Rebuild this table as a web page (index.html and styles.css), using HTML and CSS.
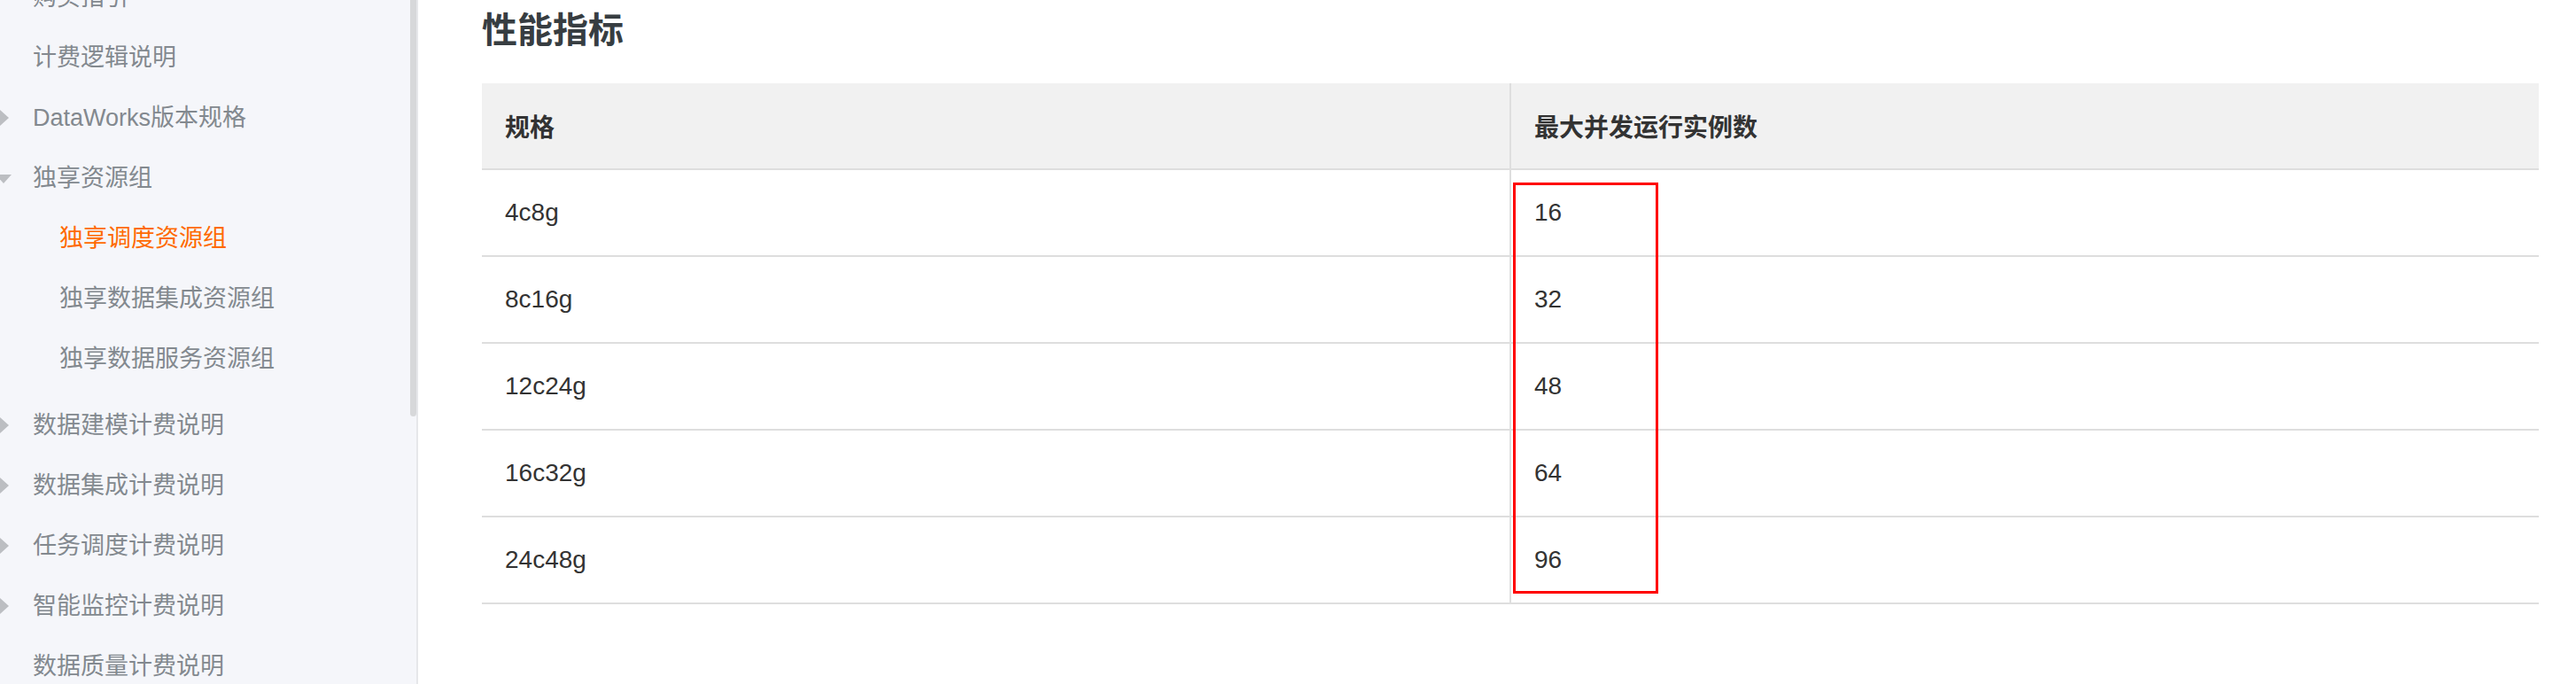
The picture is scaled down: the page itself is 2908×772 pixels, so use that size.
FILE: index.html
```html
<!DOCTYPE html>
<html lang="zh-CN">
<head>
<meta charset="utf-8">
<title>性能指标</title>
<link rel="stylesheet" href="styles.css">
</head>
<body>
<div class="page">
  <nav class="sidebar">
    <ul class="menu">
      <li class="item"><span class="caret"></span><span class="label">购买指引</span></li>
      <li class="item"><span class="caret"></span><span class="label">计费逻辑说明</span></li>
      <li class="item"><span class="caret caret-right"></span><span class="label">DataWorks版本规格</span></li>
      <li class="group">
        <div class="item"><span class="caret caret-down"></span><span class="label">独享资源组</span></div>
        <ul class="submenu">
          <li class="item sub active"><span class="caret"></span><span class="label">独享调度资源组</span></li>
          <li class="item sub"><span class="caret"></span><span class="label">独享数据集成资源组</span></li>
          <li class="item sub"><span class="caret"></span><span class="label">独享数据服务资源组</span></li>
        </ul>
      </li>
      <li class="item"><span class="caret caret-right"></span><span class="label">数据建模计费说明</span></li>
      <li class="item"><span class="caret caret-right"></span><span class="label">数据集成计费说明</span></li>
      <li class="item"><span class="caret caret-right"></span><span class="label">任务调度计费说明</span></li>
      <li class="item"><span class="caret caret-right"></span><span class="label">智能监控计费说明</span></li>
      <li class="item"><span class="caret"></span><span class="label">数据质量计费说明</span></li>
    </ul>
    <div class="scroll-thumb"></div>
  </nav>

  <main class="content">
    <h2 class="title">性能指标</h2>
    <div class="table-wrap">
      <div class="table">
        <div class="cell head">规格</div>
        <div class="cell head col2">最大并发运行实例数</div>
        <div class="cell">4c8g</div>
        <div class="cell col2">16</div>
        <div class="cell">8c16g</div>
        <div class="cell col2">32</div>
        <div class="cell">12c24g</div>
        <div class="cell col2">48</div>
        <div class="cell">16c32g</div>
        <div class="cell col2">64</div>
        <div class="cell">24c48g</div>
        <div class="cell col2">96</div>
      </div>
      <div class="highlight"></div>
    </div>
  </main>
</div>
</body>
</html>
```

FILE: styles.css
```css
html, body {
  margin: 0;
  padding: 0;
  background: #ffffff;
}

body {
  font-family: "Liberation Sans", "Noto Sans CJK SC", sans-serif;
  width: 2908px;
  height: 772px;
  overflow: hidden;
}

.page {
  display: flex;
  height: 772px;
}

/* ---------- sidebar ---------- */
.sidebar {
  position: relative;
  flex: none;
  width: 470px;
  height: 772px;
  overflow: hidden;
  background: #f5f6fa;
  border-right: 2px solid #e6e7ea;
}

.menu,
.submenu {
  list-style: none;
  margin: 0;
  padding: 0;
}

.menu {
  margin-top: -37px;
}

.submenu {
  padding-bottom: 7px;
}

.item {
  display: flex;
  align-items: center;
  height: 68px;
  font-size: 27px;
  line-height: 36px;
  color: #83898f;
  white-space: nowrap;
}

.item.sub {
  padding-left: 30px;
}

.item.active {
  color: #ff6a00;
}

.caret {
  flex: none;
  width: 37px;
  height: 20px;
  display: flex;
  align-items: center;
}

.caret-right::before {
  content: "";
  display: block;
  width: 0;
  height: 0;
  border-top: 9px solid transparent;
  border-bottom: 9px solid transparent;
  border-left: 10px solid #bcbec2;
}

.caret-down::before {
  content: "";
  display: block;
  width: 0;
  height: 0;
  margin-left: -5px;
  margin-top: 2px;
  border-left: 9px solid transparent;
  border-right: 9px solid transparent;
  border-top: 10px solid #bcbec2;
}

.scroll-thumb {
  position: absolute;
  top: 0;
  right: 0;
  width: 7px;
  height: 470px;
  border-radius: 0 0 4px 4px;
  background: #d7d8da;
}

/* ---------- content ---------- */
.content {
  flex: 1;
  padding: 14px 42px 0 72px;
  min-width: 0;
}

.title {
  margin: 0 0 40px;
  font-size: 40px;
  line-height: 40px;
  font-weight: bold;
  color: #373d41;
}

.table-wrap {
  position: relative;
}

.table {
  display: grid;
  grid-template-columns: 1160px 1fr;
}

.cell {
  display: flex;
  align-items: center;
  height: 96px;
  padding: 0 26px;
  border-bottom: 2px solid #dedede;
  font-size: 28px;
  color: #333333;
}

.cell.col2 {
  border-left: 2px solid #dedede;
}

.cell.head {
  background: #f1f1f1;
  font-weight: bold;
  color: #333333;
}

.highlight {
  position: absolute;
  left: 1164px;
  top: 112px;
  width: 164px;
  height: 464px;
  box-sizing: border-box;
  border: 3px solid #ff0000;
}
```
